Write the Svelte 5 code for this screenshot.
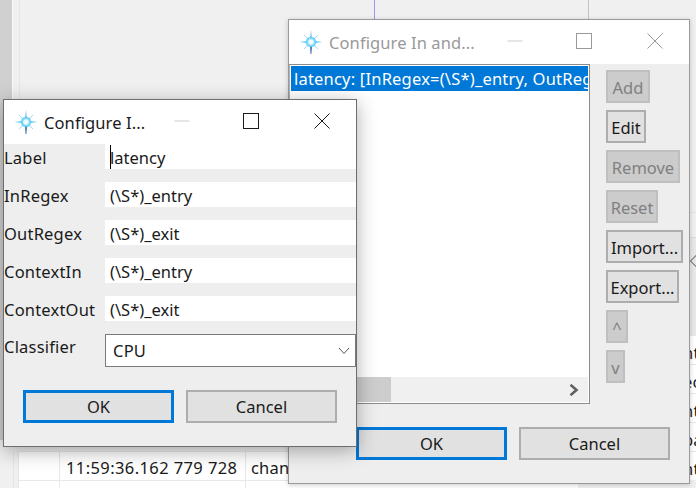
<script lang="ts">
  const fields = [
    { label: 'Label', value: 'latency', caret: true },
    { label: 'InRegex', value: '(\\S*)_entry' },
    { label: 'OutRegex', value: '(\\S*)_exit' },
    { label: 'ContextIn', value: '(\\S*)_entry' },
    { label: 'ContextOut', value: '(\\S*)_exit' }
  ];

  const sideButtons = [
    { text: 'Add', width: 44, disabled: true },
    { text: 'Edit', width: 40 },
    { text: 'Remove', width: 74, disabled: true },
    { text: 'Reset', width: 52, disabled: true },
    { text: 'Import...', width: 77 },
    { text: 'Export...', width: 73 },
    { text: '^', width: 22, disabled: true },
    { text: 'v', width: 19, disabled: true }
  ];

  const edgeRows = ['nt', 'ec', 'nt', 'pa', 'nt'];
</script>

{#snippet titlebar(title: string, inactive: boolean, id: string)}
  <header class="titlebar" class:inactive>
    <svg class="logo" width="24" height="26" viewBox="0 0 24 26">
      <defs>
        <radialGradient id={id}>
          <stop offset="0" stop-color="#fff" />
          <stop offset="0.35" stop-color="#e6f9ff" />
          <stop offset="0.7" stop-color="#5ccdf5" />
          <stop offset="1" stop-color="#5ccdf5" stop-opacity="0" />
        </radialGradient>
      </defs>
      <path d="M12 1L13.2 13L10.8 13Z" fill="#5cb4e8" />
      <path d="M10.8 13L13.2 13L12.4 25L11.6 25Z" fill="#2a64a4" />
      <path d="M0.5 13L12 11.8L12 14.2Z" fill="#2fc0f2" />
      <path d="M23.5 13L12 11.8L12 14.2Z" fill="#2fc0f2" />
      <path d="M5 6L19 20M19 6L5 20" stroke="#8ccbec" stroke-width="0.8" />
      <circle cx="12" cy="13" r="6" fill="url(#{id})" />
    </svg>
    <span class="title">{title}</span>
    <div class="controls">
      <svg class="min" width="16" height="16" viewBox="0 0 16 16"><path d="M0.5 8H15.5" stroke="#ccc" /></svg>
      <svg width="16" height="16" viewBox="0 0 16 16"><rect x="0.5" y="0.5" width="15" height="15" fill="none" stroke="currentColor" /></svg>
      <svg width="16" height="16" viewBox="0 0 16 16"><path d="M0.5 0.5L15.5 15.5M15.5 0.5L0.5 15.5" stroke="currentColor" /></svg>
    </div>
  </header>
{/snippet}

<div class="desktop">
  <div class="backdrop">
    <div class="strip"></div>
    <div class="guide guide-blue"></div>
    <div class="guide guide-gray"></div>
    <div class="table">
      <div class="table-row">
        <span></span>
        <span class="time">11:59:36.162 779 728</span>
        <span class="kind">chan</span>
      </div>
      <div class="table-row">
        <span></span>
        <span class="time"></span>
        <span class="kind"></span>
      </div>
    </div>
    <div class="edge">
      <div class="edge-band">
        <svg width="7" height="14" viewBox="0 0 7 14"><path d="M6.5 1L0.5 7L6.5 13" fill="none" stroke="#444" /></svg>
      </div>
      {#each edgeRows as t}
        <span class="edge-cell">{t}</span>
      {/each}
    </div>
  </div>

  <section class="window big">
    {@render titlebar('Configure In and...', true, 'glow-big')}
    <div class="big-body">
      <div class="list">
        <div class="list-items">
          <div class="selected">latency: [InRegex=(\S*)_entry, OutReg</div>
        </div>
        <div class="hscroll">
          <div class="thumb"></div>
          <svg width="10" height="12" viewBox="0 0 10 12"><path d="M1.5 0.8L7.5 6L1.5 11.2" fill="none" stroke="#606060" stroke-width="2.6" /></svg>
        </div>
      </div>
      <div class="side">
        {#each sideButtons as b}
          <button class="btn" disabled={b.disabled} style="width: {b.width}px">{b.text}</button>
        {/each}
      </div>
    </div>
    <footer class="actions big-actions">
      <button class="btn wide primary">OK</button>
      <button class="btn wide">Cancel</button>
    </footer>
  </section>

  <section class="window small">
    {@render titlebar('Configure I...', false, 'glow-small')}
    <div class="form">
      {#each fields as f}
        <span class="label">{f.label}</span>
        <div class="input">{#if f.caret}<i class="caret"></i>{/if}{f.value}</div>
      {/each}
      <span class="label classifier">Classifier</span>
      <div class="combo">
        <span>CPU</span>
        <svg width="12" height="8" viewBox="0 0 12 8"><path d="M1 1L6 6.5L11 1" fill="none" stroke="#555" /></svg>
      </div>
    </div>
    <footer class="actions small-actions">
      <button class="btn wide primary">OK</button>
      <button class="btn wide">Cancel</button>
    </footer>
  </section>
</div>

<style>
  :global(body) {
    margin: 0;
  }

  .desktop {
    position: relative;
    width: 696px;
    height: 488px;
    overflow: hidden;
    background: #f0f0f0;
    font-family: 'Noto Sans', 'Open Sans', sans-serif;
    font-size: 16.5px;
    letter-spacing: 0.2px;
    color: #1a1a1a;
  }

  .backdrop {
    position: absolute;
    inset: 0;
  }

  .strip {
    position: absolute;
    left: 0;
    top: 0;
    width: 12px;
    height: 440px;
    background: #d0d0d0;
    border-right: 1px solid #fafafa;
    box-shadow: 6px 0 0 #f0f0f0, 7px 0 0 #e6e6e6;
  }

  .guide {
    position: absolute;
    top: 0;
    height: 20px;
    width: 1px;
  }

  .guide-blue {
    left: 374px;
    background: #9a9ae8;
  }

  .guide-gray {
    left: 588px;
    background: #c4c4c4;
  }

  .table {
    position: absolute;
    left: 13px;
    top: 451px;
    width: 560px;
    border-left: 1px solid #e6e6e6;
    padding-left: 4px;
    display: flex;
    flex-direction: column;
  }

  .table-row {
    box-sizing: border-box;
    height: 29px;
    display: grid;
    grid-template-columns: 40px 186px 101px 70px 133px;
    align-items: stretch;
    background: #fff;
    border-top: 1px solid #e8e8e8;
    line-height: 31px;
    border-left: 1px solid #e6e6e6;
  }

  .time {
    padding-left: 6px;
    border-left: 1px solid #e8e8e8;
    white-space: nowrap;
    letter-spacing: 0.4px;
  }

  .kind {
    padding-left: 5px;
    border-left: 1px solid #e8e8e8;
  }

  .edge {
    position: absolute;
    left: 690px;
    top: 212px;
    width: 6px;
    display: flex;
    flex-direction: column;
    overflow: hidden;
    border-top: 1px solid #e4e4e4;
  }

  .edge-band {
    box-sizing: border-box;
    height: 98px;
    margin-top: 24px;
    background: #e8e8e8;
    border-top: 1px solid #dcdcdc;
  }

  .edge-band svg {
    display: block;
    margin: 16px 0 0 0;
  }

  .edge-cell {
    box-sizing: border-box;
    height: 29px;
    line-height: 33px;
    white-space: nowrap;
    margin-left: -7px;
    background: #fff;
    border-top: 1px solid #e8e8e8;
  }

  .window {
    position: absolute;
    box-sizing: border-box;
    background: #eee;
    border: 1px solid #8a8a8a;
    display: flex;
    flex-direction: column;
  }

  .big {
    left: 288px;
    top: 19px;
    width: 402px;
    height: 465px;
    border-color: #9a9a9a;
    box-shadow: 0 1px 5px rgba(0, 0, 0, 0.2);
  }

  .small {
    left: 3px;
    top: 99px;
    width: 354px;
    height: 348px;
    border-color: #6e6e6e;
    box-shadow: 0 4px 18px rgba(0, 0, 0, 0.32);
  }

  .titlebar {
    height: 44px;
    flex: none;
    display: flex;
    align-items: center;
    background: #fff;
    padding-left: 10px;
    color: #1a1a1a;
  }

  .titlebar.inactive {
    color: #999;
  }

  .logo {
    flex: none;
  }

  .title {
    margin-left: 6px;
    white-space: nowrap;
    letter-spacing: 0.1px;
  }

  .controls {
    margin-left: auto;
    display: flex;
    gap: 55px;
    padding-right: 26px;
    margin-top: -2px;
  }

  .min {
    margin-right: -2px;
  }

  .big-body {
    flex: 1;
    display: flex;
    min-height: 0;
  }

  .list {
    box-sizing: border-box;
    width: 301px;
    height: 340px;
    background: #fff;
    border: 1px solid #8c8c8c;
    border-left-color: #b0b0b0;
    padding: 1px;
    display: flex;
    flex-direction: column;
  }

  .list-items {
    flex: 1;
    overflow: hidden;
  }

  .selected {
    height: 25px;
    line-height: 25px;
    background: #0078d7;
    color: #fff;
    white-space: nowrap;
    overflow: hidden;
    padding-left: 3px;
  }

  .hscroll {
    height: 25px;
    background: #f0f0f0;
    display: flex;
    align-items: center;
    justify-content: space-between;
    padding-right: 9px;
  }

  .thumb {
    width: 100px;
    height: 100%;
    background: #cdcdcd;
  }

  .side {
    margin-left: 16px;
    padding-top: 6px;
    display: flex;
    flex-direction: column;
    align-items: flex-start;
    gap: 7px;
  }

  .side .btn {
    padding-top: 2px;
  }

  .btn {
    box-sizing: border-box;
    height: 33px;
    padding: 0;
    font: inherit;
    letter-spacing: 0;
    color: #1a1a1a;
    background: #e1e1e1;
    border: 2px solid #adadad;
    white-space: nowrap;
  }

  .btn:disabled {
    background: #ccc;
    border-color: #bfbfbf;
    color: #808080;
  }

  .btn.wide {
    width: 151px;
  }

  .btn.primary {
    border: 3px solid #0078d7;
  }

  .actions {
    display: flex;
    gap: 12px;
  }

  .big-actions {
    padding: 0 0 23px 67px;
  }

  .form {
    display: grid;
    grid-template-columns: 101px 1fr;
    row-gap: 13px;
    align-items: start;
  }

  .label {
    height: 25px;
    line-height: 28px;
    white-space: nowrap;
  }

  .input {
    position: relative;
    height: 25px;
    line-height: 27px;
    background: #fff;
    padding-left: 5px;
    letter-spacing: 0;
  }

  .caret {
    position: absolute;
    left: 5px;
    top: 1px;
    width: 1px;
    height: 24px;
    background: #000;
  }

  .classifier {
    line-height: 25px;
  }

  .combo {
    box-sizing: border-box;
    height: 33px;
    background: #fff;
    border: 1px solid #7a7a7a;
    display: flex;
    align-items: center;
    justify-content: space-between;
    padding: 0 5px 0 7px;
  }

  .small-actions {
    padding: 23px 0 0 19px;
  }
</style>
